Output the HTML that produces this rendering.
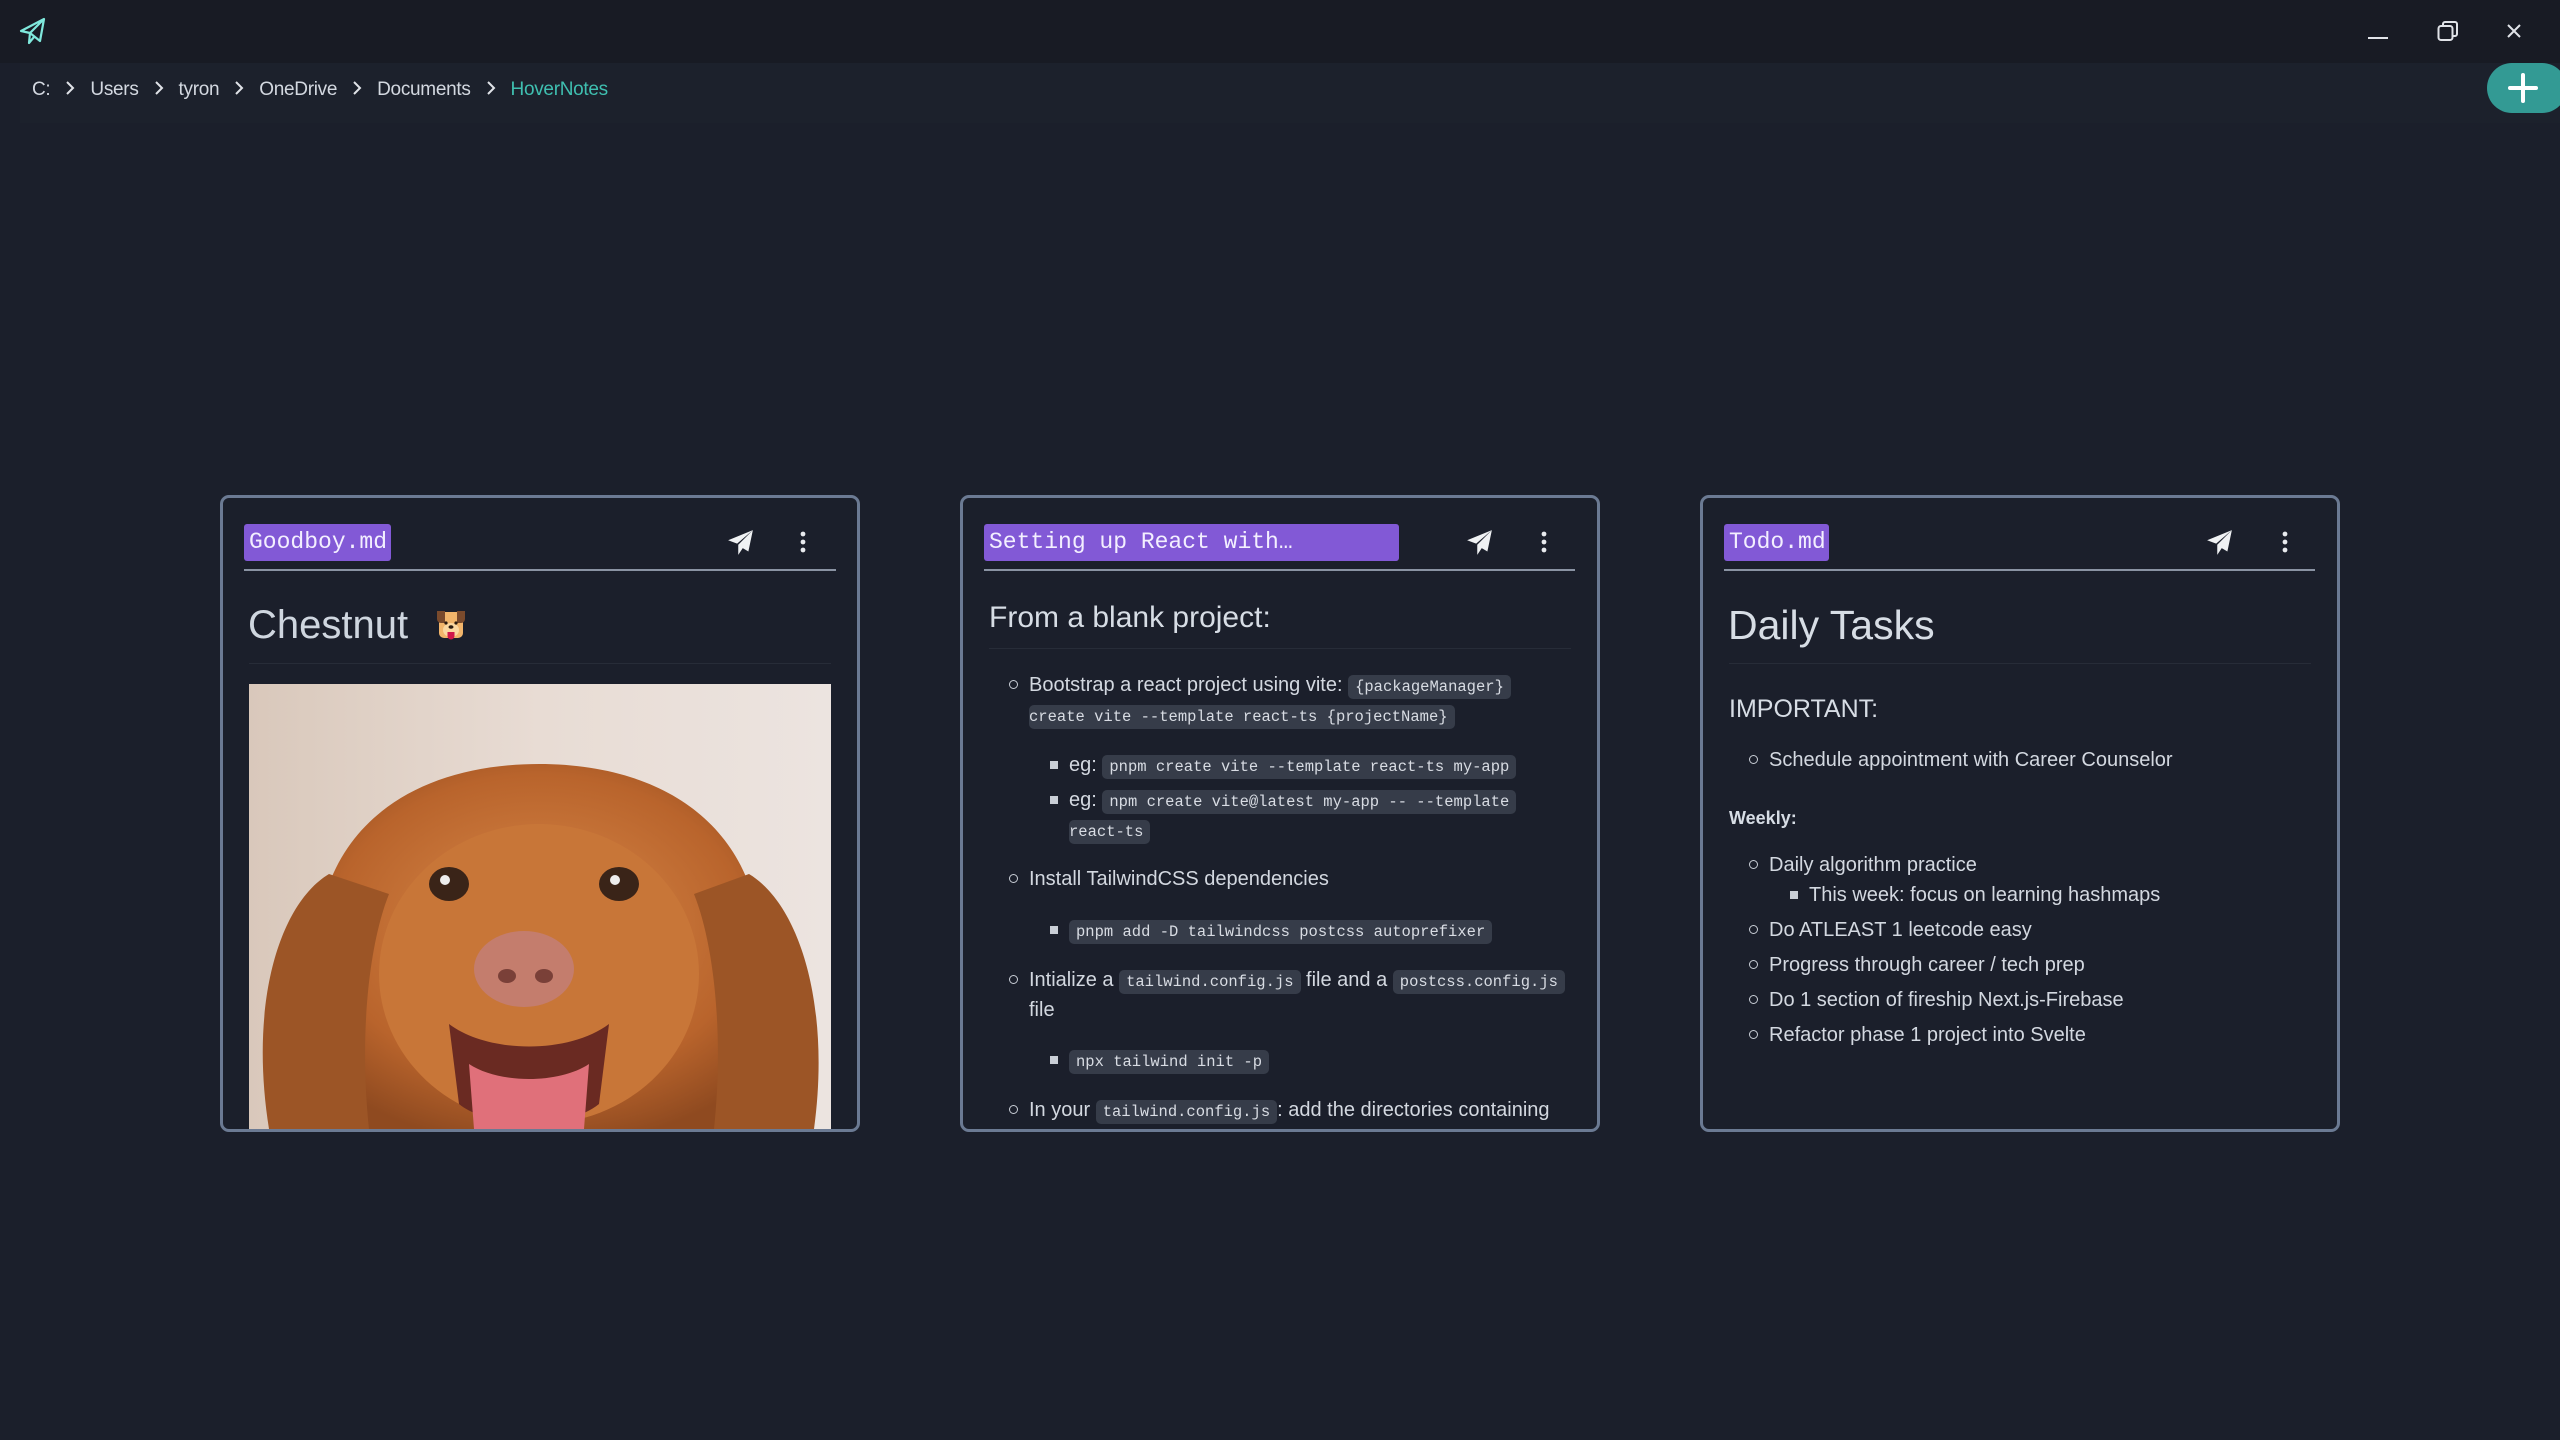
<!DOCTYPE html>
<html><head><meta charset="utf-8"><style>
*{margin:0;padding:0;box-sizing:border-box}
body{width:2560px;height:1440px;background:#1b1f2b;position:relative;overflow:hidden;font-family:"Liberation Sans",sans-serif;color:#d3d8e0}
.a{position:absolute;white-space:nowrap}
.t{position:absolute;white-space:nowrap;font-size:20px;line-height:30px;height:30px;color:#d3d8e0}
code{font-family:"Liberation Mono",monospace;font-size:15.5px;background:#363c49;color:#d8dce3;padding:3px 7px;border-radius:5px}
.card{position:absolute;top:495px;width:640px;height:637px;border:3px solid #6b7a93;border-radius:9px}
.pill{position:absolute;top:524px;height:37px;background:#8259d6;border-radius:3px;font-family:"Liberation Mono",monospace;font-size:23px;line-height:37px;color:#f3efff;padding-left:5px;white-space:nowrap}
.div{position:absolute;top:569px;height:2px;background:#8a93a3}
.hr{position:absolute;height:1px;background:#272c38}
.c{position:absolute;width:9px;height:9px;border:1.5px solid #c9ced6;border-radius:50%}
.s{position:absolute;width:8px;height:8px;background:#c9ced6}
.ch{display:inline-block;width:10px;height:16px;margin:0 15px 0 15px;vertical-align:-1px}
</style></head><body>
<div class="a" style="left:0;top:0;width:2560px;height:63px;background:#181b24"></div>
<svg class="a" style="left:19px;top:17px" width="28" height="28" viewBox="0 0 28 28"><path d="M25 2 L2 14 L11 16 Z M25 2 L21 24 L11 16 M11 16 L10 26 L15 20" fill="none" stroke="#7fe8dc" stroke-width="2.2" stroke-linejoin="round"/></svg>
<div class="a" style="left:2368px;top:37px;width:20px;height:2px;background:#e0e3e8"></div>
<svg class="a" style="left:2437px;top:20px" width="22" height="22" viewBox="0 0 22 22"><rect x="1.5" y="6" width="14" height="14" rx="2.5" fill="none" stroke="#e0e3e8" stroke-width="2"/><path d="M6 5.5 V4 a2 2 0 0 1 2 -2 H18 a2 2 0 0 1 2 2 V14 a2 2 0 0 1 -2 2 H16" fill="none" stroke="#e0e3e8" stroke-width="2"/></svg>
<svg class="a" style="left:2507px;top:24px" width="14" height="14" viewBox="0 0 14 14"><path d="M1 1 L13 13 M13 1 L1 13" stroke="#e0e3e8" stroke-width="2"/></svg>
<div class="a" style="left:20px;top:63px;width:2540px;height:60px;background:#1c212c"></div>
<div class="a" style="left:32px;top:78px;font-size:19px;line-height:24px;color:#d3d8e0;letter-spacing:-0.3px">C:<svg class="ch" viewBox="0 0 10 16"><path d="M2 2 L8 8 L2 14" fill="none" stroke="#e0e3e8" stroke-width="2"/></svg>Users<svg class="ch" viewBox="0 0 10 16"><path d="M2 2 L8 8 L2 14" fill="none" stroke="#e0e3e8" stroke-width="2"/></svg>tyron<svg class="ch" viewBox="0 0 10 16"><path d="M2 2 L8 8 L2 14" fill="none" stroke="#e0e3e8" stroke-width="2"/></svg>OneDrive<svg class="ch" viewBox="0 0 10 16"><path d="M2 2 L8 8 L2 14" fill="none" stroke="#e0e3e8" stroke-width="2"/></svg>Documents<svg class="ch" viewBox="0 0 10 16"><path d="M2 2 L8 8 L2 14" fill="none" stroke="#e0e3e8" stroke-width="2"/></svg><span style="color:#3fbfb0">HoverNotes</span></div>
<div class="a" style="left:2487px;top:63px;width:80px;height:50px;background:#339a94;border-radius:25px"></div>
<div class="a" style="left:2508px;top:86px;width:30px;height:4px;background:#fff;border-radius:2px"></div>
<div class="a" style="left:2521px;top:73px;width:4px;height:30px;background:#fff;border-radius:2px"></div>

<div class="card" style="left:220px"></div>
<div class="card" style="left:960px"></div>
<div class="card" style="left:1700px"></div>

<div class="pill" style="left:244px;width:147px">Goodboy.md</div>
<div class="pill" style="left:984px;width:415px">Setting up React with…</div>
<div class="pill" style="left:1724px;width:105px">Todo.md</div>
<div class="div" style="left:244px;width:592px"></div>
<div class="div" style="left:984px;width:591px"></div>
<div class="div" style="left:1724px;width:591px"></div>

<svg class="a" style="left:727px;top:529px" width="27" height="27" viewBox="0 0 24 24"><path d="M23 1 L1 10 L9 13 Z M23 1 L10 14 L10 23 L14 17 L19 20 Z" fill="#f0f2f4"/></svg>
<svg class="a" style="left:1466px;top:529px" width="27" height="27" viewBox="0 0 24 24"><path d="M23 1 L1 10 L9 13 Z M23 1 L10 14 L10 23 L14 17 L19 20 Z" fill="#f0f2f4"/></svg>
<svg class="a" style="left:2206px;top:529px" width="27" height="27" viewBox="0 0 24 24"><path d="M23 1 L1 10 L9 13 Z M23 1 L10 14 L10 23 L14 17 L19 20 Z" fill="#f0f2f4"/></svg>
<svg class="a" style="left:800px;top:531px" width="6" height="22"><circle cx="3" cy="3" r="2.4" fill="#e8eaee"/><circle cx="3" cy="11" r="2.4" fill="#e8eaee"/><circle cx="3" cy="19" r="2.4" fill="#e8eaee"/></svg>
<svg class="a" style="left:1541px;top:531px" width="6" height="22"><circle cx="3" cy="3" r="2.4" fill="#e8eaee"/><circle cx="3" cy="11" r="2.4" fill="#e8eaee"/><circle cx="3" cy="19" r="2.4" fill="#e8eaee"/></svg>
<svg class="a" style="left:2282px;top:531px" width="6" height="22"><circle cx="3" cy="3" r="2.4" fill="#e8eaee"/><circle cx="3" cy="11" r="2.4" fill="#e8eaee"/><circle cx="3" cy="19" r="2.4" fill="#e8eaee"/></svg>

<div class="a" style="left:248px;top:600px;font-size:40px;line-height:50px;color:#cfd6df">Chestnut</div>
<svg class="a" style="left:435px;top:608px" width="32" height="34" viewBox="0 0 32 34"><rect x="4" y="4" width="24" height="26" rx="5" fill="#f2b56b"/><path d="M2 3 h8 v12 h-4 a4 4 0 0 1 -4 -4z M30 3 h-8 v12 h4 a4 4 0 0 0 4 -4z" fill="#7a4a2c"/><ellipse cx="16" cy="22" rx="8" ry="7" fill="#fbd7a0"/><circle cx="11" cy="15" r="1.6" fill="#2a1a10"/><circle cx="21" cy="15" r="1.6" fill="#2a1a10"/><ellipse cx="16" cy="19" rx="2.5" ry="1.8" fill="#2a1a10"/><path d="M12.5 24 h7 v4 a3.5 3.5 0 0 1 -7 0z" fill="#d0164a"/></svg>
<div class="hr" style="left:249px;top:663px;width:582px"></div>
<svg class="a" style="left:249px;top:684px" width="582" height="445" viewBox="0 0 582 445">
<defs><linearGradient id="bg" x1="0" x2="1"><stop offset="0" stop-color="#d9c8bb"/><stop offset=".5" stop-color="#e8dcd4"/><stop offset="1" stop-color="#ece4e0"/></linearGradient>
<radialGradient id="fur" cx=".5" cy=".45" r=".6"><stop offset="0" stop-color="#d98a4a"/><stop offset=".7" stop-color="#b9642c"/><stop offset="1" stop-color="#8f4a20"/></radialGradient></defs>
<rect width="582" height="445" fill="url(#bg)"/>
<path d="M60 445 C40 360 30 260 80 200 C110 120 190 80 290 80 C390 80 470 120 500 200 C550 260 540 360 520 445Z" fill="url(#fur)"/>
<path d="M80 190 C30 220 0 320 20 445 L120 445 C110 350 120 260 140 210Z" fill="#9c5526"/>
<path d="M500 190 C550 220 582 320 565 445 L465 445 C475 350 465 260 445 210Z" fill="#9c5526"/>
<ellipse cx="290" cy="290" rx="160" ry="150" fill="#c87638"/>
<ellipse cx="200" cy="200" rx="20" ry="17" fill="#3a2418"/><circle cx="196" cy="196" r="5" fill="#eee"/>
<ellipse cx="370" cy="200" rx="20" ry="17" fill="#3a2418"/><circle cx="366" cy="196" r="5" fill="#eee"/>
<ellipse cx="275" cy="285" rx="50" ry="38" fill="#c47d6d"/><ellipse cx="258" cy="292" rx="9" ry="7" fill="#7a4038"/><ellipse cx="295" cy="292" rx="9" ry="7" fill="#7a4038"/>
<path d="M200 340 C240 370 320 370 360 340 L350 420 C320 445 240 445 210 420Z" fill="#6a2a22"/>
<path d="M220 380 C250 400 310 400 340 380 L335 445 L225 445Z" fill="#e0707a"/>
</svg>

<div class="a" style="left:989px;top:600px;font-size:30px;line-height:36px;color:#d7dde5">From a blank project:</div>
<div class="hr" style="left:989px;top:648px;width:582px"></div>
<div class="c" style="left:1009px;top:680px"></div>
<div class="t" style="left:1029px;top:670px">Bootstrap a react project using vite: <code>{packageManager}</code></div>
<div class="t" style="left:1029px;top:700px"><code style="padding-left:0">create vite --template react-ts {projectName}</code></div>
<div class="s" style="left:1050px;top:761px"></div>
<div class="t" style="left:1069px;top:750px">eg: <code>pnpm create vite --template react-ts my-app</code></div>
<div class="s" style="left:1050px;top:796px"></div>
<div class="t" style="left:1069px;top:785px">eg: <code>npm create vite@latest my-app -- --template</code></div>
<div class="t" style="left:1069px;top:815px"><code style="padding-left:0">react-ts</code></div>
<div class="c" style="left:1009px;top:874px"></div>
<div class="t" style="left:1029px;top:864px">Install TailwindCSS dependencies</div>
<div class="s" style="left:1050px;top:926px"></div>
<div class="t" style="left:1069px;top:915px"><code>pnpm add -D tailwindcss postcss autoprefixer</code></div>
<div class="c" style="left:1009px;top:975px"></div>
<div class="t" style="left:1029px;top:965px">Intialize a <code>tailwind.config.js</code> file and a <code>postcss.config.js</code></div>
<div class="t" style="left:1029px;top:995px">file</div>
<div class="s" style="left:1050px;top:1056px"></div>
<div class="t" style="left:1069px;top:1045px"><code>npx tailwind init -p</code></div>
<div class="c" style="left:1009px;top:1105px"></div>
<div class="t" style="left:1029px;top:1095px;height:34px;overflow:hidden">In your <code>tailwind.config.js</code>: add the directories containing</div>

<div class="a" style="left:1728px;top:600px;font-size:41px;line-height:50px;color:#d7dde5">Daily Tasks</div>
<div class="hr" style="left:1729px;top:663px;width:582px"></div>
<div class="a" style="left:1729px;top:694px;font-size:25px;line-height:30px;color:#d7dde5">IMPORTANT:</div>
<div class="c" style="left:1749px;top:755px"></div>
<div class="t" style="left:1769px;top:745px">Schedule appointment with Career Counselor</div>
<div class="a" style="left:1729px;top:805px;font-size:18px;line-height:26px;font-weight:bold;color:#d7dde5">Weekly:</div>
<div class="c" style="left:1749px;top:860px"></div>
<div class="t" style="left:1769px;top:850px">Daily algorithm practice</div>
<div class="s" style="left:1790px;top:891px"></div>
<div class="t" style="left:1809px;top:880px">This week: focus on learning hashmaps</div>
<div class="c" style="left:1749px;top:925px"></div>
<div class="t" style="left:1769px;top:915px">Do ATLEAST 1 leetcode easy</div>
<div class="c" style="left:1749px;top:960px"></div>
<div class="t" style="left:1769px;top:950px">Progress through career / tech prep</div>
<div class="c" style="left:1749px;top:995px"></div>
<div class="t" style="left:1769px;top:985px">Do 1 section of fireship Next.js-Firebase</div>
<div class="c" style="left:1749px;top:1030px"></div>
<div class="t" style="left:1769px;top:1020px">Refactor phase 1 project into Svelte</div>
</body></html>
